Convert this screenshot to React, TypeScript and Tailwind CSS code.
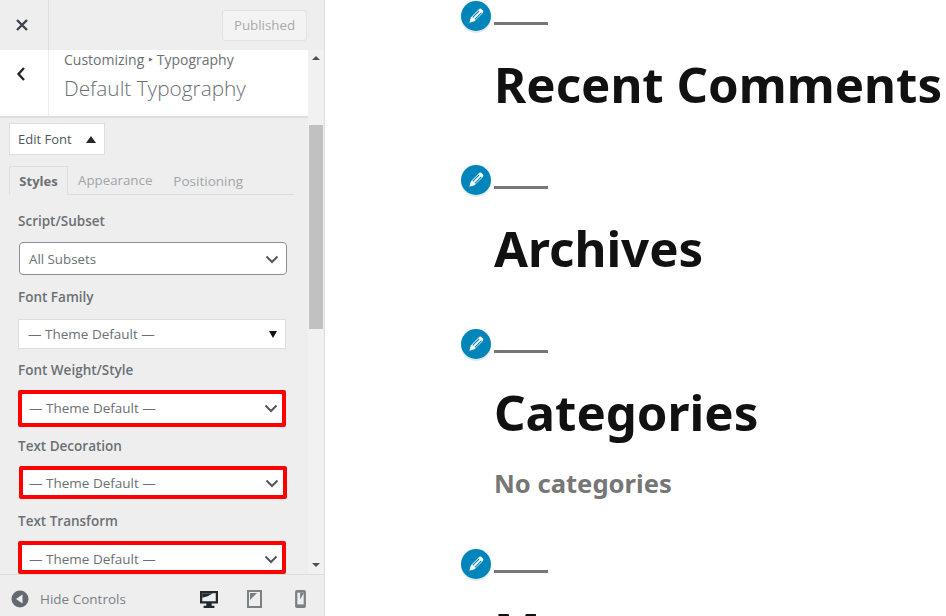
import { ReactNode } from "react";

const uiFont = "font-['Open_Sans','Noto_Sans',sans-serif]";

function Chevron() {
  return (
    <svg width="14" height="9" viewBox="0 0 14 9" fill="none" className="shrink-0">
      <path d="M1.5 1.5 7 7l5.500-5.500" stroke="#50575e" strokeWidth="2" />
    </svg>
  );
}

function Label({ children, className }: { children: ReactNode; className: string }) {
  return <p className={`text-[13.500px] leading-[18px] font-semibold text-[#6b7075] ${className}`}>{children}</p>;
}

function RedSelect({ className }: { className: string }) {
  return (
    <div className={`flex w-[268px] items-center justify-between rounded-[2px] border-4 border-[#f00] bg-white pr-[4px] ${className}`}>
      <span className="text-[13.500px] text-[#6b7075]">— Theme Default —</span>
      <Chevron />
    </div>
  );
}

function PencilBadge() {
  return (
    <div className="absolute top-[-7px] left-[-33px] flex h-[30px] w-[30px] items-center justify-center rounded-full bg-[#0085ba] shadow-[0_2px_1px_#dfe6ea,0_0_0_2px_#fff]">
      <svg width="20" height="20" viewBox="0 0 18 18" fill="none">
        <path d="M3 15l1.300-4.700 7.500-7.500c.6-.6 1.500-.6 2.100 0l1.300 1.300c.6.6.6 1.500 0 2.100L7.700 13.700 3 15z" fill="#fff" />
        <path d="M6 10.200l5.800-5.800M8 12l5.800-5.800" stroke="#0085ba" strokeWidth="1" />
      </svg>
    </div>
  );
}

function WidgetBlock({ title, className, titleGap = "mt-[39px]", children }: { title: string; className: string; titleGap?: string; children?: ReactNode }) {
  return (
    <section className={`relative ${className}`}>
      <PencilBadge />
      <div className="relative top-[14px] h-[3px] w-[54px] bg-[#767676]" />
      <h2 className={`${titleGap} text-[49.200px] leading-[68px] font-bold whitespace-nowrap text-[#111]`}>{title}</h2>
      {children}
    </section>
  );
}

export default function App() {
  return (
    <div className="flex h-[616px] w-[946px] overflow-hidden bg-white">
      <aside className={`flex w-[325px] shrink-0 flex-col border-r border-[#ddd] bg-[#eee] ${uiFont}`}>
        <div className="flex h-[50px] shrink-0 items-center justify-between pr-[17px]">
          <div className="flex h-[50px] w-[49px] items-center justify-center border-r border-[#ddd] pr-[4px]">
            <svg width="14" height="14" viewBox="0 0 14 14" fill="none">
              <path d="M2 2l10 10M12 2 2 12" stroke="#3c434a" strokeWidth="2.400" />
            </svg>
          </div>
          <button className="mt-[1px] h-[31px] w-[85px] rounded-[3px] border border-[#e2e2e2] bg-[#f3f3f3] text-[13.300px] text-[#a7aaad]">Published</button>
        </div>

        <div className="flex min-h-0 flex-1">
          <div className="min-w-0 flex-1 overflow-hidden">
            <header className="flex h-[68px] border-b-2 border-[#ddd] bg-white">
              <div className="flex w-[49px] shrink-0 items-center justify-center border-r border-[#eee] pr-[6px]">
                <svg width="10" height="16" viewBox="0 0 10 16" fill="none" className="mb-[19px]">
                  <path d="M8 2 2.500 8 8 14" stroke="#23282d" strokeWidth="2.400" />
                </svg>
              </div>
              <div className="pl-[15px]">
                <p className="mt-[1px] text-[14px] leading-[18px] text-[#6b7075]">Customizing ‣ Typography</p>
                <p className="mt-[6px] text-[20.800px] leading-[27px] font-light text-[#6b7075]">Default Typography</p>
              </div>
            </header>

            <div className="px-[9px]">
              <button className="mt-[5px] flex h-[32px] w-[96px] items-center gap-[14px] border border-[#ddd] bg-white pt-[1px] pl-[8px] text-[13px] text-[#50575e]">
                Edit Font
                <span className="h-0 w-0 border-x-[5px] border-b-[7px] border-x-transparent border-b-[#23282d]" />
              </button>

              <div className="mt-[11px] flex h-[29px] w-[285px] items-end border-b border-[#ddd]">
                <div className="mb-[-1px] flex h-[29px] w-[59px] items-center justify-center border border-b-0 border-[#ddd] bg-[#eee] pt-[2px] text-[13px] font-bold text-[#6b7075]">Styles</div>
                <span className="ml-[10px] pb-[3px] text-[13.300px] text-[#a0a5aa]">Appearance</span>
                <span className="ml-[21px] pb-[3px] text-[13.500px] text-[#a0a5aa]">Positioning</span>
              </div>

              <Label className="mt-[17px] ml-[9px]">Script/Subset</Label>
              <div className="mt-[12px] ml-[10px] flex h-[33px] w-[268px] items-center justify-between rounded-[4px] border border-[#8c8f94] bg-white pt-[2px] pr-[7px] pl-[9px]">
                <span className="text-[13.300px] text-[#6b7075]">All Subsets</span>
                <Chevron />
              </div>

              <Label className="mt-[13px] ml-[9px]">Font Family</Label>
              <div className="mt-[13px] ml-[9px] flex h-[30px] w-[268px] items-center justify-between border border-[#ddd] bg-white pt-[1px] pr-[8px] pl-[9px]">
                <span className="text-[13.500px] text-[#6b7075]">— Theme Default —</span>
                <span className="h-0 w-0 border-x-[4px] border-t-[7px] border-x-transparent border-t-[#111]" />
              </div>

              <Label className="mt-[12px] ml-[9px]">Font Weight/Style</Label>
              <RedSelect className="mt-[11px] ml-[9px] h-[37px] pl-[7px]" />

              <Label className="mt-[10px] ml-[9px]">Text Decoration</Label>
              <RedSelect className="mt-[11px] ml-[10px] h-[33px] pt-[1px] pl-[6px]" />

              <Label className="mt-[13px] ml-[9px]">Text Transform</Label>
              <RedSelect className="mt-[11px] ml-[9px] h-[33px] pt-[3px] pl-[7px]" />
            </div>
          </div>

          <div className="flex w-[16px] shrink-0 flex-col items-center bg-[#f1f1f1]">
            <span className="mt-[6px] h-0 w-0 border-x-[4px] border-b-[4px] border-x-transparent border-b-[#505050]" />
            <div className="mt-[65px] h-[204px] w-[14px] bg-[#c1c1c1]" />
            <span className="mt-auto mb-[7px] h-0 w-0 border-x-[4px] border-t-[4px] border-x-transparent border-t-[#505050]" />
          </div>
        </div>

        <footer className="flex h-[42px] shrink-0 items-center border-t border-[#ddd] pt-[7px] pr-[17px] pl-[11px]">
          <svg width="18" height="18" viewBox="0 0 18 18">
            <circle cx="9" cy="9" r="8.500" fill="#646970" />
            <path d="M11.500 4.500v9L5 9z" fill="#eee" />
          </svg>
          <span className="ml-[11px] text-[13.500px] text-[#7b8085]">Hide Controls</span>
          <svg width="18" height="18" viewBox="0 0 20 20" className="ml-[74px]">
            <path d="M0 1h20v14h-7v2.500h3V20H4v-2.500h3V15H0z" fill="#23282d" />
            <path d="M2.500 3.500h15v9h-15z" fill="#eee" />
            <path d="M2.500 3.500h12l-6 3.500-6 1.500z" fill="#23282d" />
          </svg>
          <svg width="15" height="18" viewBox="0 0 15 18" className="ml-[29px]">
            <path d="M1 1h13v16H1z" fill="#eee" stroke="#7b8085" strokeWidth="2" />
            <path d="M3 3h7L3 10z" fill="#7b8085" />
          </svg>
          <svg width="11" height="18" viewBox="0 0 12 20" className="ml-[33px]">
            <rect x="0" y="0" width="12" height="20" rx="2" fill="#7b8085" />
            <path d="M2.500 3h7v13h-7z" fill="#eee" />
            <path d="M5.500 3h4v1L5.500 10.500z" fill="#7b8085" />
          </svg>
        </footer>
      </aside>

      <main className="min-w-0 flex-1 overflow-hidden pl-[169px] font-['Noto_Sans',sans-serif]">
        <WidgetBlock title="Recent Comments" className="mt-[8px]" />
        <WidgetBlock title="Archives" className="mt-[54px]" />
        <WidgetBlock title="Categories" className="mt-[54px]">
          <p className="mt-[20px] text-[25.600px] leading-[36px] font-bold text-[#767676]">No categories</p>
        </WidgetBlock>
        <WidgetBlock title="Meta" className="mt-[54px]" titleGap="mt-[37px]" />
      </main>
    </div>
  );
}
